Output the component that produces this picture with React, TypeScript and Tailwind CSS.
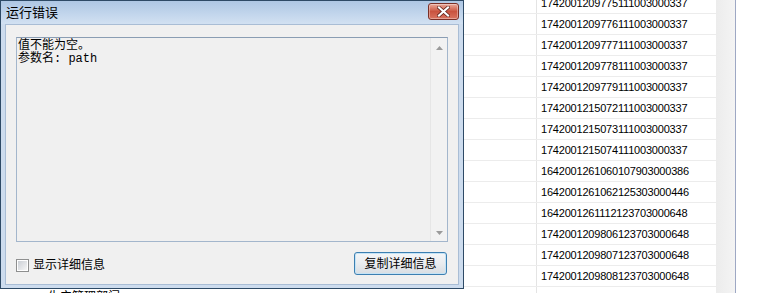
import React from 'react'

const codes = [
  '1742001209775111003000337',
  '1742001209776111003000337',
  '1742001209777111003000337',
  '1742001209778111003000337',
  '1742001209779111003000337',
  '1742001215072111003000337',
  '1742001215073111003000337',
  '1742001215074111003000337',
  '1642001261060107903000386',
  '1642001261062125303000446',
  '1642001261112123703000648',
  '1742001209806123703000648',
  '1742001209807123703000648',
  '1742001209808123703000648',
  '',
]

const sans = { fontFamily: '"Liberation Sans", "Noto Sans CJK SC", sans-serif' }

function Grid() {
  return (
    <div className="flex h-full" style={sans}>
      <div className="mt-[-7px] flex w-[716px] flex-col">
        {codes.map((code, i) => (
          <div key={i} className="flex h-[21px] shrink-0 border-b border-[#ececec]">
            <div className="w-[537px] shrink-0 border-r border-[#e4e4e4] pl-[48px] text-[12px] leading-[21px] text-black">
              {i === codes.length - 1 ? '生产管理部门' : ''}
            </div>
            <div className="flex-1 pl-[4px] text-[11px] leading-[21px] tracking-[-0.2px] text-black">{code}</div>
          </div>
        ))}
      </div>
      <div className="w-[19px] shrink-0 bg-gradient-to-r from-[#ececec] to-[#f4f4f4]" />
      <div className="w-px shrink-0 bg-[#9ea8c4]" />
      <div className="flex-1 bg-white" />
    </div>
  )
}

function CloseButton() {
  return (
    <div className="flex h-[17px] w-[31px] items-center justify-center rounded-[3px] border border-[#7a2f26] bg-gradient-to-b from-[#e9a99b] via-[#c9533f] to-[#d9735f] shadow-[inset_0_0_0_1px_rgba(255,255,255,0.35)]">
      <svg width="13" height="11" viewBox="0 0 13 11">
        <path d="M2 1.5 L11 9.5 M11 1.5 L2 9.5" stroke="#5a1d15" strokeWidth="3.6" strokeLinecap="square" />
        <path d="M2 1.5 L11 9.5 M11 1.5 L2 9.5" stroke="#ffffff" strokeWidth="2.2" strokeLinecap="square" />
      </svg>
    </div>
  )
}

function ScrollArrow({ up }: { up?: boolean }) {
  return (
    <svg width="7" height="4" viewBox="0 0 7 4">
      <path d={up ? 'M0 4 L3.5 0 L7 4 Z' : 'M0 0 L3.5 4 L7 0 Z'} fill="#9a9a9a" />
    </svg>
  )
}

function Dialog() {
  return (
    <div className="absolute left-0 top-0 flex h-[289px] w-[464px] flex-col border border-[#2e4a66] bg-[#cddcee]" style={sans}>
      <div className="flex h-[23px] shrink-0 items-center justify-between bg-gradient-to-b from-[#aec7e4] to-[#d2e1f2] pl-[5px] pr-[4px]">
        <span className="text-[13px] text-black">运行错误</span>
        <div className="mt-[-3px]">
          <CloseButton />
        </div>
      </div>
      <div className="mx-[4px] mb-[3px] flex flex-1 flex-col border border-[#a9bdd5] bg-[#f0f0f0] px-[10px] pt-[12px]">
        <div className="flex h-[205px] border border-[#a3b6cc] border-t-[#8a9db3] bg-[#f0f0f0]">
          <div
            className="flex-1 pl-[1px] pt-[2px] text-[12px] leading-[13px] text-black"
            style={{ fontFamily: '"Liberation Mono", "Noto Sans CJK SC", monospace' }}
          >
            <div>值不能为空。</div>
            <div>参数名: path</div>
          </div>
          <div className="flex w-[17px] flex-col items-center justify-between border-l border-[#e6e6e6] bg-[#f2f2f2] pb-[6px] pt-[8px]">
            <ScrollArrow up />
            <ScrollArrow />
          </div>
        </div>
        <div className="mt-[10px] flex items-center justify-between pr-[1px]">
          <label className="flex items-center gap-[4px] pt-[3px] text-[12px] text-black">
            <span className="flex h-[13px] w-[13px] items-center justify-center border border-[#8e8f8f] bg-white">
              <span className="h-[9px] w-[9px] bg-gradient-to-br from-[#cbcfd5] to-[#f6f6f6]" />
            </span>
            显示详细信息
          </label>
          <button className="flex h-[23px] w-[93px] items-center justify-center rounded-[3px] border border-[#3c7fb1] bg-gradient-to-b from-[#f4f6f8] via-[#e9ecef] to-[#d8dde2] text-[12px] text-black shadow-[inset_0_0_0_1px_#c4e3f6]">
            复制详细信息
          </button>
        </div>
      </div>
    </div>
  )
}

export default function App() {
  return (
    <div className="relative h-[293px] w-[771px] overflow-hidden bg-white">
      <Grid />
      <Dialog />
    </div>
  )
}
